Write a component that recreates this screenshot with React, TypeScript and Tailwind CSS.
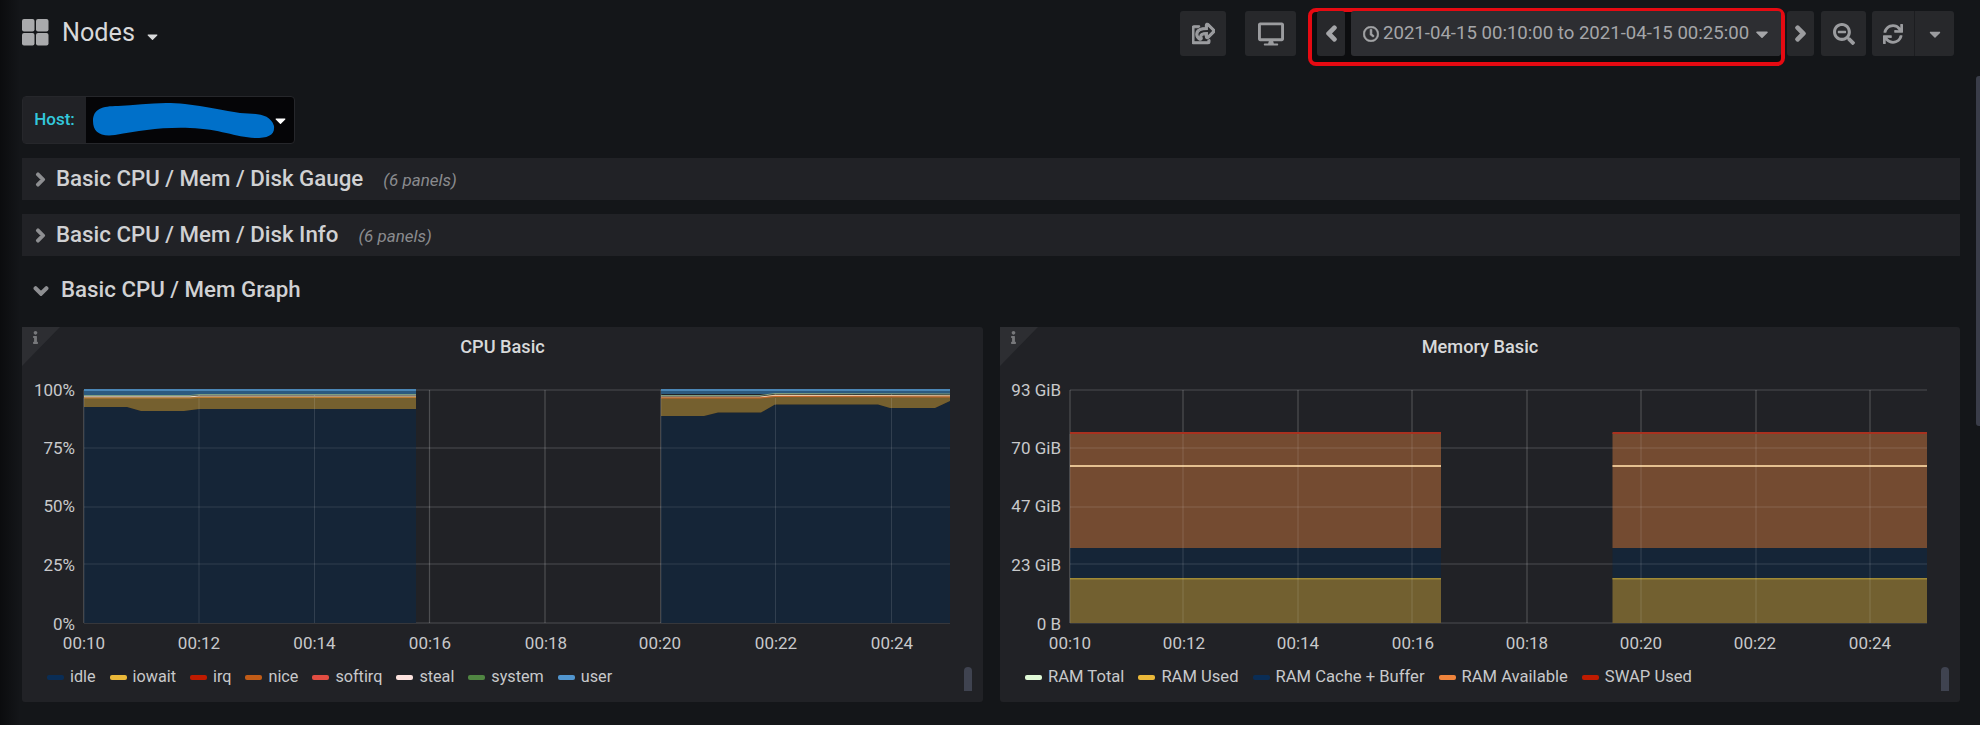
import React from "react";
import { FaRegShareSquare, FaDesktop, FaChevronLeft, FaChevronRight, FaChevronDown, FaRegClock, FaCaretDown, FaSearchMinus, FaSync, FaInfo } from "react-icons/fa";

const btn = "mt-[3px] h-[45px] flex items-center justify-center rounded-[3px] bg-[#27282b] text-[#9b9c9f]";

function Row({ title }: { title: string }) {
  return (
    <div className="h-[42px] flex items-center bg-[#212226] pl-[11px]">
      <FaChevronRight strokeWidth={50} className="text-[15px] text-[#8e8f92]" />
      <span className="ml-[8px] text-[22.3px] font-medium text-[#d0d1d3]">{title}</span>
      <span className="ml-[20px] mt-[3px] text-[17px] italic text-[#8a8b8e]">(6 panels)</span>
    </div>
  );
}

function Legend({ items, scrollClass }: { items: [string, string][]; scrollClass: string }) {
  return (
    <div className={`relative h-[47px] flex items-start pt-[12px] gap-[14px] leading-[20px] text-[#c8c9cb] ${scrollClass}`}>
      {items.map(([n, c]) => (
        <div key={n} className="flex items-center gap-[6px]">
          <svg width="17" height="5"><rect width="17" height="5" rx="2" fill={c} /></svg>
          <span>{n}</span>
        </div>
      ))}
      <div className="absolute right-[11px] top-[12px] w-[8px] h-[24px] rounded-t-[4px] bg-[#3f4350]" />
    </div>
  );
}

function Corner() {
  return (
    <>
      <div className="absolute left-0 top-0 w-[38px] h-[39px] bg-[#2d2e32] [clip-path:polygon(0_0,100%_0,0_100%)]" />
      <FaInfo className="absolute left-[7px] top-[4px] text-[13px] text-[#77787b]" />
    </>
  );
}

const T = ({ x, y, a = "middle", children }: { x: number; y: number; a?: "middle" | "end"; children: React.ReactNode }) => (
  <text x={x} y={y} textAnchor={a} fontSize={17} fill="#c8c9cb">{children}</text>
);

const hs = [390, 448, 507, 564, 623];
const xl = ["00:10", "00:12", "00:14", "00:16", "00:18", "00:20", "00:22", "00:24"];

function Grid({ x0, x1, vs }: { x0: number; x1: number; vs: number[] }) {
  return (
    <g stroke="#ffffff" strokeOpacity="0.2" strokeWidth="1.2" fill="none">
      {hs.map((y) => <line key={y} x1={x0} x2={x1} y1={y} y2={y} />)}
      {vs.map((x) => <line key={x} x1={x} x2={x} y1={390} y2={623} />)}
    </g>
  );
}

function CpuChart() {
  const vs = [84, 199, 314.5, 429.5, 545, 661, 775.5, 891.5];
  const a = "84,407 127,407 141,411 184,411 199,409 416,409";
  const b = "661,416 704,416 718,412.5 761,412.5 775,404.5 878,404.5 890,408 935,408 950,401";
  const ta = "84,397 190,397 199,396 416,396";
  const tb = "661,397 760,397 775,394.5 950,395.5";
  const series = (top: string, bot: string, fill: string) => <polygon points={`${top} ${bot}`} fill={fill} />;
  return (
    <svg viewBox="22 375 961 280" className="block w-[961px] h-[280px] font-['Roboto',sans-serif]">
      <Grid x0={84} x1={950} vs={vs} />
      <polygon points={`84,623 ${a} 416,623`} fill="#152537" />
      <polygon points={`661,623 ${b} 950,623`} fill="#152537" />
      {series(ta, "416,409 199,409 184,411 141,411 127,407 84,407", "#75602f")}
      {series(tb, "950,401 935,408 890,408 878,404.5 775,404.5 761,412.5 718,412.5 704,416 661,416", "#75602f")}
      <rect x="84" y="389" width="332" height="6" fill="#2c5a7f" />
      <rect x="661" y="389" width="289" height="5" fill="#2c5a7f" />
      <rect x="84" y="389" width="332" height="2" fill="#4b86b5" />
      <rect x="661" y="389" width="289" height="2" fill="#4b86b5" />
      <polyline points="84,395.5 190,395.5 199,394.5 416,394.5" fill="none" stroke="#7f9f80" strokeWidth="1" />
      <polyline points="661,395.5 760,395.5 775,393.5 950,394" fill="none" stroke="#7f9f80" strokeWidth="1" />
      <polyline points="84,396.8 190,396.8 199,396 416,396" fill="none" stroke="#e8d8c8" strokeWidth="1.2" />
      <polyline points="661,397 760,397 775,395.3 950,395.8" fill="none" stroke="#e8c8a8" strokeWidth="1.2" />
      <polyline points="84,398 190,398 199,397.5 416,397.5" fill="none" stroke="#c07a30" strokeWidth="1" />
      <polyline points="661,398 760,398 775,396.5 950,397" fill="none" stroke="#c8652a" strokeWidth="1" />
      <g stroke="#ffffff" strokeOpacity="0.12" strokeWidth="1">
        {vs.filter((x) => x < 416 || x >= 661).map((x) => <line key={x} x1={x} x2={x} y1={398} y2={623} />)}
        {hs.slice(1, 4).map((y) => <line key={y} x1={84} x2={416} y1={y} y2={y} />)}
        {hs.slice(1, 4).map((y) => <line key={y} x1={661} x2={950} y1={y} y2={y} />)}
      </g>
      {["100%", "75%", "50%", "25%", "0%"].map((l, i) => <T key={l} x={75} y={[396, 454, 512, 571, 630][i]} a="end">{l}</T>)}
      {xl.map((l, i) => <T key={l} x={[84, 199, 314.5, 430, 546, 660, 776, 892][i]} y={649}>{l}</T>)}
    </svg>
  );
}

function MemChart() {
  const vs = [1070, 1183, 1298, 1412, 1527, 1641, 1756, 1870];
  const block = (x: number, w: number) => (
    <g key={x}>
      <rect x={x} y="433" width={w} height="115" fill="#744b31" />
      <rect x={x} y="548" width={w} height="30" fill="#152537" />
      <rect x={x} y="578" width={w} height="45" fill="#726030" />
      <rect x={x} y="432" width={w} height="2" fill="#a8311f" />
      <rect x={x} y="465" width={w} height="2" fill="#e5c090" />
      <rect x={x} y="578" width={w} height="1.5" fill="#a08a35" />
    </g>
  );
  return (
    <svg viewBox="1000 375 960 280" className="block w-[960px] h-[280px] font-['Roboto',sans-serif]">
      <Grid x0={1070} x1={1927} vs={vs} />
      {block(1070, 371)}
      {block(1612.5, 314.5)}
      <g stroke="#ffffff" strokeOpacity="0.14" strokeWidth="1">
        {[1070, 1183, 1298, 1412, 1641, 1756, 1870].map((x) => <line key={x} x1={x} x2={x} y1={434} y2={623} />)}
        {[448, 507, 564].map((y) => (
          <g key={y}>
            <line x1={1070} x2={1441} y1={y} y2={y} />
            <line x1={1612.5} x2={1927} y1={y} y2={y} />
          </g>
        ))}
      </g>
      {["93 GiB", "70 GiB", "47 GiB", "23 GiB", "0 B"].map((l, i) => <T key={l} x={1061} y={[396, 454, 512, 571, 630][i]} a="end">{l}</T>)}
      {xl.map((l, i) => <T key={l} x={[1070, 1184, 1298, 1413, 1527, 1641, 1755, 1870][i]} y={649}>{l}</T>)}
    </svg>
  );
}

function Panel({ title, children, legend, pad }: { title: string; children: React.ReactNode; legend: [string, string][]; pad: string }) {
  return (
    <div className="relative h-[375px] rounded-[3px] bg-[#212226]">
      <Corner />
      <div className="h-[48px] pt-[8px] text-center text-[18.2px] leading-[24px] font-medium text-[#d8d9da]">{title}</div>
      {children}
      <Legend items={legend} scrollClass={pad} />
    </div>
  );
}

export default function App() {
  return (
    <div className="relative w-[1980px] h-[733px] overflow-hidden bg-white font-['Roboto',sans-serif]">
      <div className="h-[725px] bg-[#141619] pl-[22px] pr-[20px]">
        <header className="h-[96px] flex items-start pt-[8px]">
          <div className="flex items-center h-[50px]">
            <svg width="27" height="27" viewBox="0 0 27 27" className="mt-[-1px]">
              <rect x="0" y="0" width="12.5" height="12.5" rx="2" fill="#a9aaac" />
              <rect x="14" y="0" width="12.5" height="12.5" rx="2" fill="#a9aaac" />
              <rect x="0" y="14" width="12.5" height="12.5" rx="2" fill="#a9aaac" />
              <rect x="14" y="14" width="12.5" height="12.5" rx="2" fill="#a9aaac" />
            </svg>
            <span className="ml-[13px] text-[25.2px] leading-[50px] text-[#d8d9da]">Nodes</span>
            <FaCaretDown className="ml-[9px] mt-[6px] text-[17px] text-[#d8d9da]" />
          </div>
          <div className="ml-auto mr-[6px] flex items-start">
            <div className={`${btn} w-[46px] text-[23px]`}><FaRegShareSquare strokeWidth={30} /></div>
            <div className={`${btn} ml-[19px] w-[51px] text-[26px]`}><FaDesktop /></div>
            <div className="ml-[12px] w-[477px] h-[58px] flex items-start rounded-[8px] border-[4px] border-[#e60a12] bg-[#0c0d0f] pl-[5px]">
              <div className="-mt-[1px] w-[28px] h-[45px] flex items-center justify-center rounded-[3px] bg-[#27282b] text-[17px] text-[#a5a6a9]"><FaChevronLeft strokeWidth={60} /></div>
              <div className="-mt-[1px] ml-[6px] w-[430px] h-[45px] flex items-center rounded-[3px] bg-[#2d2e32] pl-[12px] text-[18.6px] text-[#a5a6a9]">
                <FaRegClock strokeWidth={20} className="text-[16px] mr-[4px]" />
                <span>2021-04-15 00:10:00 to 2021-04-15 00:25:00</span>
                <FaCaretDown className="ml-[3px] text-[20px]" />
              </div>
            </div>
            <div className={`${btn} ml-[2px] w-[27px] text-[17px]`}><FaChevronRight strokeWidth={60} /></div>
            <div className={`${btn} ml-[7px] w-[45px] text-[22px]`}><FaSearchMinus /></div>
            <div className={`${btn} ml-[6px] w-[82px]`}>
              <div className="w-[43px] h-full flex items-center justify-center text-[20px] border-r border-[#1c1d20]"><FaSync /></div>
              <div className="w-[39px] h-full flex items-center justify-center text-[18px]"><FaCaretDown /></div>
            </div>
          </div>
        </header>

        <div className="w-[273px] h-[48px] flex rounded-[4px] border border-[#26272b] bg-[#050507]">
          <div className="w-[64px] flex items-center justify-center bg-[#212226] text-[17px] font-medium text-[#33c8dc]">Host:</div>
          <div className="relative flex-1">
            <svg width="208" height="48" viewBox="86 96 208 48" className="block">
              <path d="M93 120 C93 108 102 105 118 105 C140 104 160 100 185 103 C205 105 225 110 240 112 C255 113 270 112 274 125 C275 134 268 137 255 137 C235 136 220 128 190 127 C160 126 140 130 115 134 C100 136 93 131 93 120 Z" fill="#0070c9" />
            </svg>
            <FaCaretDown className="absolute left-[186px] top-[15px] text-[17px] text-white" />
          </div>
        </div>

        <div className="mt-[14px] flex flex-col gap-[14px]">
          <Row title="Basic CPU / Mem / Disk Gauge" />
          <Row title="Basic CPU / Mem / Disk Info" />
        </div>

        <div className="h-[71px] flex items-center pl-[11px] pb-[4px]">
          <FaChevronDown strokeWidth={50} className="text-[16px] text-[#8e8f92] mt-[3px]" />
          <span className="ml-[12px] text-[22.3px] font-medium text-[#d0d1d3]">Basic CPU / Mem Graph</span>
        </div>

        <div className="grid grid-cols-[961px_960px] gap-[17px]">
          <Panel title="CPU Basic" pad="pl-[25px] text-[16.2px]" legend={[["idle", "#0a2d55"], ["iowait", "#eab839"], ["irq", "#bf1b00"], ["nice", "#c15c17"], ["softirq", "#e24d42"], ["steal", "#fce2de"], ["system", "#508642"], ["user", "#5195ce"]]}>
            <CpuChart />
          </Panel>
          <Panel title="Memory Basic" pad="pl-[25px] text-[16.6px]" legend={[["RAM Total", "#e0f9d7"], ["RAM Used", "#eab839"], ["RAM Cache + Buffer", "#0a2d55"], ["RAM Available", "#ef843c"], ["SWAP Used", "#bf1b00"]]}>
            <MemChart />
          </Panel>
        </div>
      </div>
      <div className="absolute left-0 top-0 w-[20px] h-[725px] bg-gradient-to-r from-[#0b0c0e] to-transparent" />
      <div className="absolute right-0 top-[76px] w-[4px] h-[350px] rounded-l-[3px] bg-[#3a3d49]" />
    </div>
  );
}
